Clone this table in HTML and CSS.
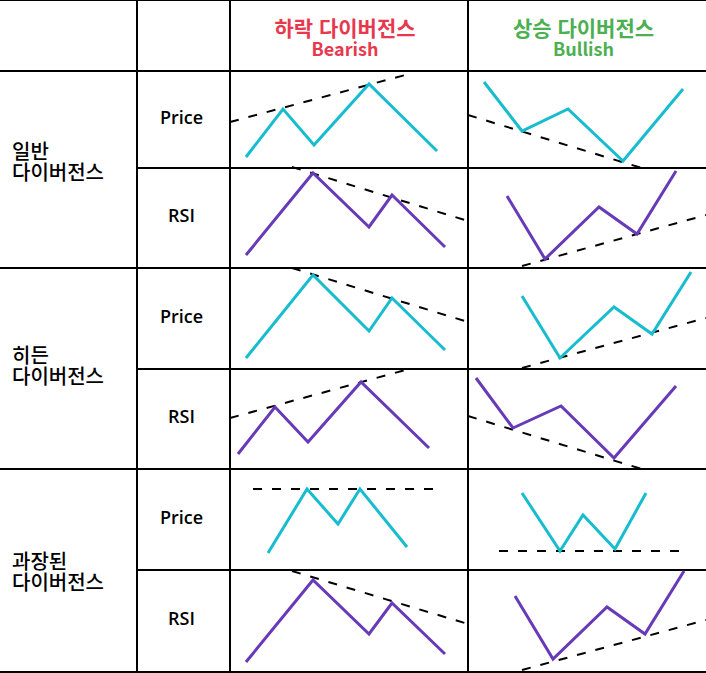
FILE: index.html
```html
<!DOCTYPE html>
<html lang="ko">
<head>
<meta charset="utf-8">
<title>다이버전스</title>
<link rel="stylesheet" href="styles.css">
</head>
<body>
<div class="table">
  <div class="cell"></div>
  <div class="cell"></div>
  <div class="cell head bear"><span class="ko">하락 다이버전스</span><span class="en">Bearish</span></div>
  <div class="cell head bull"><span class="ko">상승 다이버전스</span><span class="en">Bullish</span></div>

  <div class="cell label shift-lg">일반<br>다이버전스</div>
  <div class="cell metric">Price</div>
  <div class="cell chart"><svg class="plot" viewBox="231 72 236 95"><line class="trend" x1="230" y1="122" x2="409" y2="74"/><polyline class="price" points="246,157 283,109 314,145 369,84 437,151"/></svg></div>
  <div class="cell chart"><svg class="plot" viewBox="469 72 237 95"><line class="trend" x1="468" y1="115" x2="645" y2="169"/><polyline class="price" points="484,82 522,131 568,109 623,161 683,89"/></svg></div>
  <div class="cell metric">RSI</div>
  <div class="cell chart"><svg class="plot" viewBox="231 169 236 98"><line class="trend" x1="292" y1="167" x2="468" y2="221"/><polyline class="rsi" points="246,255 313,173 369,227 392,195 445,247"/></svg></div>
  <div class="cell chart"><svg class="plot" viewBox="469 169 237 98"><line class="trend" x1="522" y1="266" x2="706" y2="215"/><polyline class="rsi" points="507,196 545,259 599,207 637,234 676,171"/></svg></div>

  <div class="cell label shift-sm">히든<br>다이버전스</div>
  <div class="cell metric">Price</div>
  <div class="cell chart"><svg class="plot" viewBox="231 269 236 99"><line class="trend" x1="292" y1="268" x2="468" y2="322"/><polyline class="price" points="246,358 313,275 369,331 392,298 445,350"/></svg></div>
  <div class="cell chart"><svg class="plot" viewBox="469 269 237 99"><line class="trend" x1="522" y1="368" x2="706" y2="318"/><polyline class="price" points="522,296 560,358 614,307 652,334 691,272"/></svg></div>
  <div class="cell metric">RSI</div>
  <div class="cell chart"><svg class="plot" viewBox="231 370 236 98"><line class="trend" x1="230" y1="418" x2="409" y2="369"/><polyline class="rsi" points="238,454 275,407 308,442 361,382 429,448"/></svg></div>
  <div class="cell chart"><svg class="plot" viewBox="469 370 237 98"><line class="trend" x1="468" y1="416" x2="645" y2="470"/><polyline class="rsi" points="476,378 513,428 561,406 614,458 676,386"/></svg></div>

  <div class="cell label">과장된<br>다이버전스</div>
  <div class="cell metric">Price</div>
  <div class="cell chart"><svg class="plot" viewBox="231 470 236 99"><line class="trend" x1="253" y1="489" x2="438" y2="489"/><polyline class="price" points="268,553 307,489 338,524 360,489 407,547"/></svg></div>
  <div class="cell chart"><svg class="plot" viewBox="469 470 237 99"><line class="trend" x1="499" y1="551" x2="686" y2="551"/><polyline class="price" points="522,493 560,551 583,515 615,549 646,493"/></svg></div>
  <div class="cell metric">RSI</div>
  <div class="cell chart"><svg class="plot" viewBox="231 571 236 100"><line class="trend" x1="292" y1="571" x2="468" y2="624"/><polyline class="rsi" points="246,662 313,580 369,634 392,603 445,654"/></svg></div>
  <div class="cell chart"><svg class="plot" viewBox="469 571 237 100"><line class="trend" x1="522" y1="670" x2="706" y2="620"/><polyline class="rsi" points="515,596 553,659 607,607 645,634 684,571"/></svg></div>
</div>
</body>
</html>
```

FILE: styles.css
```css
html, body {
  margin: 0;
  padding: 0;
  background: #fff;
}

body {
  font-family: "Noto Sans CJK KR", "Noto Sans", sans-serif;
  color: #000;
}

.table {
  width: 706px;
  display: grid;
  grid-template-columns: 136px 91px 236px 237px;
  grid-template-rows: 69px 95px 98px 99px 98px 99px 100px;
  gap: 2px;
  background: #000;
  border-top: 1px solid #000;
  padding-bottom: 2px;
}

.cell {
  background: #fff;
  min-width: 0;
  min-height: 0;
}

.head {
  display: flex;
  flex-direction: column;
  align-items: center;
  justify-content: center;
  padding-right: 8px;
  padding-top: 3px;
  font-family: "Noto Sans CJK KR", sans-serif;
  font-weight: 700;
}

.head .ko {
  font-size: 21px;
  line-height: 22px;
}

.head .en {
  font-size: 18px;
  line-height: 20px;
}

.bear { color: #e8384d; }
.bull { color: #4caf50; }

.label {
  grid-row: span 2;
  display: flex;
  align-items: center;
  padding-left: 12px;
  font-family: "Noto Sans CJK KR", sans-serif;
  font-size: 20px;
  line-height: 21px;
  font-weight: 500;
}

.shift-lg { padding-bottom: 18px; }
.shift-sm { padding-bottom: 8px; }

.metric {
  display: flex;
  align-items: center;
  justify-content: center;
  padding-right: 4px;
  padding-bottom: 6px;
  font-family: "Open Sans", "Noto Sans", sans-serif;
  font-weight: 600;
  font-size: 18px;
}

.chart {
  position: relative;
}

.plot {
  display: block;
  width: 100%;
  height: 100%;
  overflow: visible;
  position: relative;
  z-index: 1;
}

.plot polyline {
  fill: none;
  stroke-width: 3;
  stroke-linejoin: miter;
  stroke-linecap: butt;
}

.plot .price { stroke: #17bccf; }
.plot .rsi { stroke: #673ab7; }

.plot .trend {
  stroke: #000;
  stroke-width: 2;
  stroke-dasharray: 9 10;
}
```
